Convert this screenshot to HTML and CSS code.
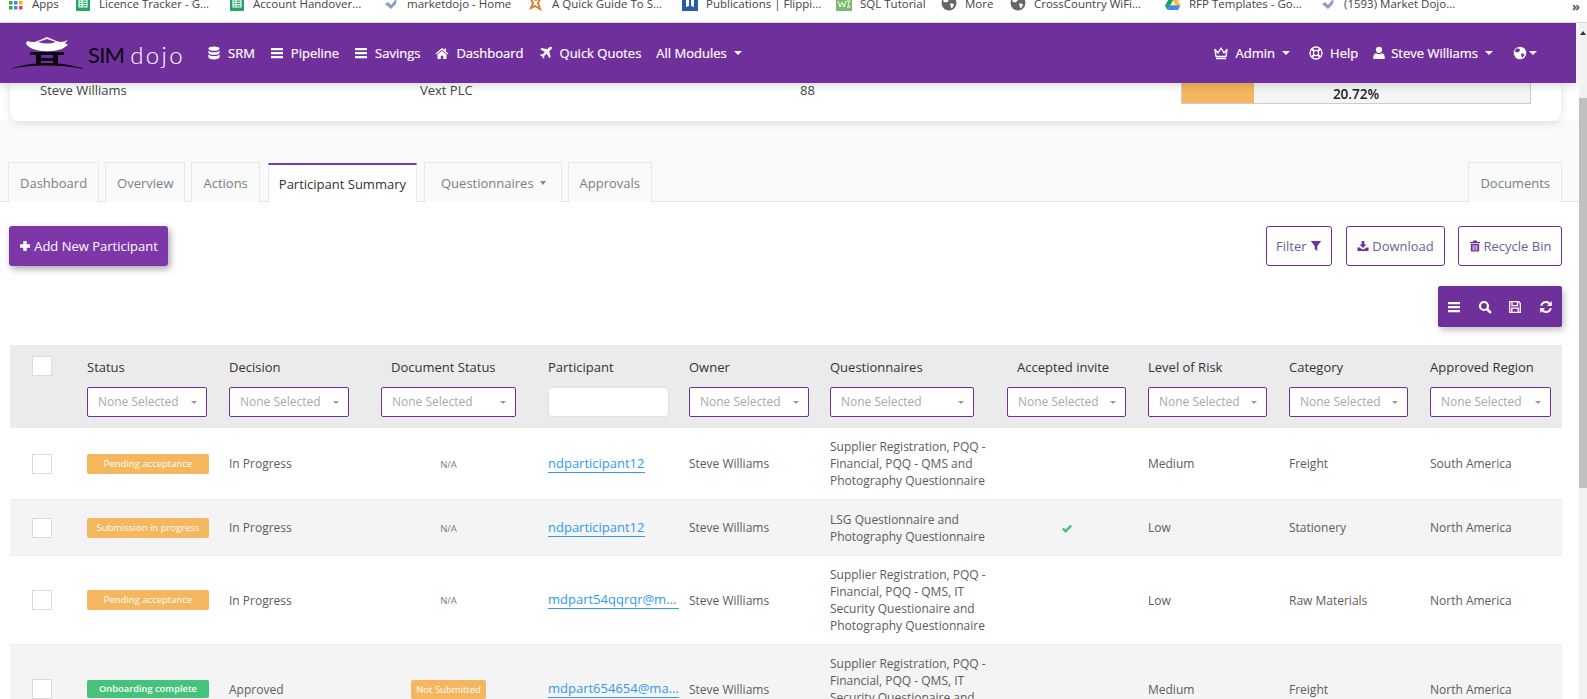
FILE: index.html
```html
<!DOCTYPE html>
<html lang="en">
<head>
<meta charset="utf-8">
<title>Participant Summary</title>
<link rel="stylesheet" href="styles.css">
</head>
<body>
<svg class="defs" width="0" height="0" aria-hidden="true">
  <symbol id="i-bars" viewBox="0 0 14 14"><path d="M1 2h12v2.2H1zM1 6h12v2.2H1zM1 10h12v2.2H1z" fill="currentColor"/></symbol>
  <symbol id="i-db" viewBox="0 0 14 14"><g fill="currentColor"><ellipse cx="7" cy="2.6" rx="5.6" ry="2.2"/><path d="M1.4 4.4c1 1.3 3 1.8 5.6 1.8s4.600-.5 5.600-1.800v2.300c0 1.200-2.500 2.100-5.600 2.100s-5.600-.9-5.600-2.100z"/><path d="M1.400 8.300c1 1.300 3 1.800 5.600 1.800s4.600-.5 5.600-1.800v3c0 1.200-2.500 2.100-5.600 2.100s-5.600-.9-5.600-2.100z"/></g></symbol>
  <symbol id="i-home" viewBox="0 0 14 14"><path d="M7 2 .5 7.500l.8.9L7 3.700l5.700 4.700.8-.9L11 5.400V2.500H9.500v1.600zM2.500 8.400V13h3.300V9.700h2.400V13h3.300V8.400L7 4.700z" fill="currentColor"/></symbol>
  <symbol id="i-plane" viewBox="0 0 14 14"><path d="M12.800 1.200c-.8-.8-2-.4-2.800.4L8.300 3.300 2.600 2 1.400 3.200l4.500 2.700-2.400 2.600-1.700-.3-.9.900 2.300 1.300 1.300 2.300.9-.9-.3-1.700 2.600-2.400 2.700 4.500 1.200-1.200-1.300-5.700 1.700-1.700c.8-.8 1.200-2 .8-2.600z" fill="currentColor"/></symbol>
  <symbol id="i-crown" viewBox="0 0 16 14"><path d="M2 3.500 5 7l3-5 3 5 3-3.500-1 7H3zM3 12.500h10" fill="none" stroke="currentColor" stroke-width="1.400" stroke-linejoin="round"/></symbol>
  <symbol id="i-life" viewBox="0 0 14 14"><g fill="none" stroke="currentColor"><circle cx="7" cy="7" r="6" stroke-width="1.300"/><circle cx="7" cy="7" r="2.600" stroke-width="1.200"/><path d="m2.800 2.800 2.400 2.400M11.200 2.800 8.800 5.200M2.800 11.200l2.400-2.400M11.200 11.200 8.800 8.800" stroke-width="2.200"/></g></symbol>
  <symbol id="i-user" viewBox="0 0 12 14"><g fill="currentColor"><circle cx="6" cy="3.800" r="3.100"/><path d="M.8 13c-.4 0-.6-.3-.6-.7 0-2.800.9-5 2.900-5 .8.700 1.800 1 2.900 1s2.100-.3 2.900-1c2 0 2.900 2.200 2.900 5 0 .4-.2.700-.6.700z"/></g></symbol>
  <symbol id="i-globe" viewBox="0 0 14 14"><circle cx="7" cy="7" r="6.300" fill="currentColor"/><path d="M4 2.200c1 .5 2.400.3 3 1.300.6 1-.8 1.400-1.300 2.300-.5.900-2 .5-3 .3-.7-.2-.9-1 -.4-2 .4-.8 1-1.400 1.700-1.900zM8.300 7.500c1-.3 2.400 0 3 .8.300.8-.8 2.600-1.900 3.300-.8-.3-.6-1.500-1-2.300-.3-.6-.8-1.500-.1-1.800z" fill="#70309c"/></symbol>
  <symbol id="i-globe-grey" viewBox="0 0 14 14"><circle cx="7" cy="7" r="6.500" fill="#666"/><path d="M4 2.200c1 .5 2.400.3 3 1.300.6 1-.8 1.400-1.300 2.300-.5.900-2 .5-3 .3-.7-.2-.9-1 -.4-2 .4-.8 1-1.400 1.700-1.900zM8.300 7.500c1-.3 2.400 0 3 .8.300.8-.8 2.600-1.900 3.300-.8-.3-.6-1.500-1-2.300-.3-.6-.8-1.500-.1-1.800z" fill="#fff"/></symbol>
  <symbol id="i-plus" viewBox="0 0 12 12"><path d="M4.300 1h3.400v3.300H11v3.400H7.700V11H4.300V7.700H1V4.300h3.300z" fill="currentColor"/></symbol>
  <symbol id="i-filter" viewBox="0 0 12 12"><path d="M.8 1h10.400L7.300 6v5L4.700 9V6z" fill="currentColor"/></symbol>
  <symbol id="i-download" viewBox="0 0 13 12"><path d="M5 .5h3v4h2.300L6.500 8.300 2.700 4.500H5zM.5 7.500h2.600l2 2h2.800l2-2h2.600v4H.5z" fill="currentColor"/></symbol>
  <symbol id="i-trash" viewBox="0 0 11 12"><path d="M4 .5h3l.8 1.500H10.500v1.200H.5V2h2.700zM1.300 4h8.400v6.500c0 .6-.4 1-1 1H2.300c-.6 0-1-.4-1-1zM3.200 5v5.500h.8V5zM5.100 5v5.500h.8V5zM7 5v5.500h.8V5z" fill="currentColor" fill-rule="evenodd"/></symbol>
  <symbol id="i-search" viewBox="0 0 14 14"><g fill="none" stroke="currentColor"><circle cx="6" cy="6" r="4" stroke-width="2.200"/><path d="m9 9 3.800 3.800" stroke-width="2.600"/></g></symbol>
  <symbol id="i-save" viewBox="0 0 14 14"><path d="M1.700 1.700h9l1.600 1.600v9H1.700zM4 1.700v4h5.500v-4M3.800 12.300V8.200h6.400v4.100" fill="none" stroke="currentColor" stroke-width="1.300"/></symbol>
  <symbol id="i-refresh" viewBox="0 0 14 14"><g fill="currentColor"><path d="M1.200 5.800C1.800 3 4.200 1 7 1c1.700 0 3.100.7 4.200 1.700L12.800 1v5H7.900l1.800-1.800C9 3.500 8 3.100 7 3.100c-1.700 0-3.200 1.100-3.700 2.700z"/><path d="M12.800 8.200C12.200 11 9.800 13 7 13c-1.700 0-3.100-.7-4.200-1.700L1.200 13V8h4.900l-1.800 1.800C5 10.500 6 10.900 7 10.900c1.700 0 3.200-1.100 3.700-2.700z"/></g></symbol>
  <symbol id="i-check" viewBox="0 0 12 10"><path d="M1 5.200 2.700 3.600 4.600 5.500 9.300.8 11 2.400 4.600 8.900z" fill="currentColor"/></symbol>
  <symbol id="i-tick" viewBox="0 0 16 16"><path d="M2 9l3-2 3 3 6-7-1 6-5 5z" fill="#8aa0c8"/><path d="M11 1l3 2-2 3z" fill="#e3a04a"/></symbol>
  <symbol id="i-sheet" viewBox="0 0 16 16"><rect x="1" y="0" width="14" height="16" rx="1" fill="#23a566"/><path d="M4 5h8v7H4zM4 7.300h8M4 9.600h8M7 5v7" fill="none" stroke="#fff" stroke-width="1.100"/></symbol>
</svg>

<div class="bookmarks">
  <div class="bm w-a"><svg class="bm-ico" viewBox="0 0 16 16"><g><rect x="1" y="1" width="3.500" height="3.500" fill="#e8453c"/><rect x="6" y="1" width="3.500" height="3.500" fill="#f9bb2d"/><rect x="11" y="1" width="3.500" height="3.500" fill="#f4b400"/><rect x="1" y="6" width="3.500" height="3.500" fill="#34a853"/><rect x="6" y="6" width="3.500" height="3.500" fill="#4285f4"/><rect x="11" y="6" width="3.500" height="3.500" fill="#f4b400"/><rect x="1" y="11" width="3.500" height="3.500" fill="#34a853"/><rect x="6" y="11" width="3.500" height="3.500" fill="#4285f4"/><rect x="11" y="11" width="3.500" height="3.500" fill="#e8453c"/></g></svg><span>Apps</span></div>
  <div class="bm w-b"><svg class="bm-ico"><use href="#i-sheet"/></svg><span>Licence Tracker - G...</span></div>
  <div class="bm w-c"><svg class="bm-ico"><use href="#i-sheet"/></svg><span>Account Handover...</span></div>
  <div class="bm w-d"><svg class="bm-ico"><use href="#i-tick"/></svg><span>marketdojo - Home</span></div>
  <div class="bm w-e"><svg class="bm-ico" viewBox="0 0 16 16"><path d="M2 2l6 3 5-3-3 6 2 6-5-3-4 2 2-5z" fill="none" stroke="#d9822b" stroke-width="2"/></svg><span>A Quick Guide To S...</span></div>
  <div class="bm w-f"><svg class="bm-ico" viewBox="0 0 16 16"><rect width="16" height="16" fill="#2a5ba8"/><path d="M4 4v8l3-1V5zM12 4v8l-3-1V5z" fill="#fff"/></svg><span>Publications | Flippi...</span></div>
  <div class="bm w-g"><svg class="bm-ico" viewBox="0 0 16 16"><rect width="16" height="16" fill="#7cb96b"/><path d="M2 6l2 6 2-5 2 5 2-6M11 6h3l-2 3 2 3h-3" fill="none" stroke="#fff" stroke-width="1"/></svg><span>SQL Tutorial</span></div>
  <div class="bm w-h"><svg class="bm-ico"><use href="#i-globe-grey"/></svg><span>More</span></div>
  <div class="bm w-i"><svg class="bm-ico"><use href="#i-globe-grey"/></svg><span>CrossCountry WiFi...</span></div>
  <div class="bm w-j"><svg class="bm-ico" viewBox="0 0 16 16"><path d="M5.500 1h5l5 9h-5z" fill="#fbc02d"/><path d="M5.500 1 0 10.500 2.500 15 8 5.500z" fill="#1ea362"/><path d="M2.500 15h10.500l2.500-4.800H5.200z" fill="#4688f1"/></svg><span>RFP Templates - Go...</span></div>
  <div class="bm w-k"><svg class="bm-ico"><use href="#i-tick"/></svg><span>(1593) Market Dojo...</span></div>
  <div class="bm-more">»</div>
</div>

<div class="app">
  <div class="page">
    <header class="nav">
      <div class="logo">
        <svg class="logo-mark" viewBox="0 0 76 34">
          <path d="M0 33c12-4 24-6 37-6s27 2 39 6c-13-2.500-26-3.500-39-3.500S12 30.500 0 33z" fill="#0a0510"/>
          <path d="M21 16h34v3H49v9h-5v-3H32v3h-5v-9h-6zM32 19v3h12v-3z" fill="#0a0510" fill-rule="evenodd"/>
          <path d="M18 5c5 2 9 1 13-1l7-3 7 3c4 2 8 3 14 0l-3 3 3 2-6 4c-10 3-20 3-29 0-3-1-5-3-7-5z" fill="#fff"/>
          <path d="M29 6l9-3 9 3c-6 2-12 2-18 0z" fill="#70309c"/>
        </svg>
        <span class="logo-sim">SIM</span><span class="logo-dojo">dojo</span>
      </div>
      <nav class="menu">
        <a class="item"><svg class="ico"><use href="#i-db"/></svg>SRM</a>
        <a class="item"><svg class="ico"><use href="#i-bars"/></svg>Pipeline</a>
        <a class="item"><svg class="ico"><use href="#i-bars"/></svg>Savings</a>
        <a class="item"><svg class="ico"><use href="#i-home"/></svg>Dashboard</a>
        <a class="item"><svg class="ico"><use href="#i-plane"/></svg>Quick Quotes</a>
        <a class="item">All Modules<i class="caret"></i></a>
      </nav>
      <nav class="menu menu-right">
        <a class="item m-admin"><svg class="ico ico-wide"><use href="#i-crown"/></svg>Admin<i class="caret"></i></a>
        <a class="item"><svg class="ico"><use href="#i-life"/></svg>Help</a>
        <a class="item m-user"><svg class="ico ico-thin"><use href="#i-user"/></svg>Steve Williams<i class="caret"></i></a>
        <a class="item"><svg class="ico ico-none"><use href="#i-globe"/></svg><i class="caret caret-tight"></i></a>
      </nav>
    </header>

    <section class="card">
      <div class="card-col c-owner">Steve Williams</div>
      <div class="card-col c-company">Vext PLC</div>
      <div class="card-col c-count">88</div>
      <div class="progress">
        <div class="progress-fill" style="width:20.72%"></div>
        <div class="progress-text">20.72%</div>
      </div>
    </section>

    <div class="tabs">
      <a class="tab">Dashboard</a>
      <a class="tab">Overview</a>
      <a class="tab">Actions</a>
      <a class="tab tab-active">Participant Summary</a>
      <a class="tab tab-q">Questionnaires<i class="caret caret-grey"></i></a>
      <a class="tab">Approvals</a>
      <a class="tab tab-docs">Documents</a>
    </div>

    <div class="actions">
      <button class="btn-primary"><svg class="btn-ico"><use href="#i-plus"/></svg>Add New Participant</button>
      <div class="actions-right">
        <button class="btn-outline b-filter">Filter <svg class="btn-ico"><use href="#i-filter"/></svg></button>
        <button class="btn-outline b-down"><svg class="btn-ico"><use href="#i-download"/></svg>Download</button>
        <button class="btn-outline b-bin"><svg class="btn-ico"><use href="#i-trash"/></svg>Recycle Bin</button>
      </div>
    </div>

    <div class="toolbar-row">
      <div class="toolbar">
        <svg class="tool-ico"><use href="#i-bars"/></svg>
        <svg class="tool-ico"><use href="#i-search"/></svg>
        <svg class="tool-ico"><use href="#i-save"/></svg>
        <svg class="tool-ico"><use href="#i-refresh"/></svg>
      </div>
    </div>

    <table class="grid">
      <colgroup>
        <col class="k0"><col class="k1"><col class="k2"><col class="k3"><col class="k4"><col class="k5"><col class="k6"><col class="k7"><col class="k8"><col class="k9"><col class="k10">
      </colgroup>
      <thead>
        <tr>
          <th class="cb-cell"><span class="box"></span></th>
          <th><div class="th-label">Status</div><div class="sel">None Selected</div></th>
          <th><div class="th-label">Decision</div><div class="sel">None Selected</div></th>
          <th class="doc"><div class="th-label th-inset">Document Status</div><div class="sel sel-full">None Selected</div></th>
          <th class="part"><div class="th-label">Participant</div><input class="part-input" type="text" aria-label="Participant"></th>
          <th><div class="th-label">Owner</div><div class="sel">None Selected</div></th>
          <th><div class="th-label">Questionnaires</div><div class="sel sel-q">None Selected</div></th>
          <th><div class="th-label th-inset">Accepted invite</div><div class="sel sel-full">None Selected</div></th>
          <th><div class="th-label">Level of Risk</div><div class="sel sel-full">None Selected</div></th>
          <th><div class="th-label">Category</div><div class="sel sel-full">None Selected</div></th>
          <th><div class="th-label">Approved Region</div><div class="sel sel-full">None Selected</div></th>
        </tr>
      </thead>
      <tbody>
        <tr>
          <td class="cb-cell"><span class="box"></span></td>
          <td><span class="badge amber">Pending acceptance</span></td>
          <td>In Progress</td>
          <td class="doc center"><span class="na">N/A</span></td>
          <td class="part"><a class="link">ndparticipant12</a></td>
          <td>Steve Williams</td>
          <td class="q">Supplier Registration, PQQ - Financial, PQQ - QMS and Photography Questionnaire</td>
          <td class="center"></td>
          <td>Medium</td>
          <td>Freight</td>
          <td>South America</td>
        </tr>
        <tr class="row-two">
          <td class="cb-cell"><span class="box"></span></td>
          <td><span class="badge amber">Submission in progress</span></td>
          <td>In Progress</td>
          <td class="doc center"><span class="na">N/A</span></td>
          <td class="part"><a class="link">ndparticipant12</a></td>
          <td>Steve Williams</td>
          <td class="q">LSG Questionnaire and Photography Questionnaire</td>
          <td class="center"><svg class="check"><use href="#i-check"/></svg></td>
          <td>Low</td>
          <td>Stationery</td>
          <td>North America</td>
        </tr>
        <tr>
          <td class="cb-cell"><span class="box"></span></td>
          <td><span class="badge amber">Pending acceptance</span></td>
          <td>In Progress</td>
          <td class="doc center"><span class="na">N/A</span></td>
          <td class="part"><a class="link">mdpart54qqrqr@marketdojo.com</a></td>
          <td>Steve Williams</td>
          <td class="q">Supplier Registration, PQQ - Financial, PQQ - QMS, IT Security Questionaire and Photography Questionnaire</td>
          <td class="center"></td>
          <td>Low</td>
          <td>Raw Materials</td>
          <td>North America</td>
        </tr>
        <tr>
          <td class="cb-cell"><span class="box"></span></td>
          <td><span class="badge green">Onboarding complete</span></td>
          <td>Approved</td>
          <td class="doc center"><span class="badge amber badge-small">Not Submitted</span></td>
          <td class="part"><a class="link">mdpart654654@marketdojo.com</a></td>
          <td>Steve Williams</td>
          <td class="q">Supplier Registration, PQQ - Financial, PQQ - QMS, IT Security Questionaire and Photography Questionnaire</td>
          <td class="center"></td>
          <td>Medium</td>
          <td>Freight</td>
          <td>North America</td>
        </tr>
      </tbody>
    </table>
  </div>
  <aside class="scrollbar">
    <i class="scroll-up"></i>
    <div class="scroll-thumb"></div>
  </aside>
</div>
</body>
</html>
```

FILE: styles.css
```css
* { box-sizing: border-box; }
html, body { margin: 0; height: 699px; overflow: hidden; background: #fff; }
body { font-family: "Open Sans", "Liberation Sans", sans-serif; font-size: 12px; color: #555; }
.defs { position: absolute; }

/* Browser bookmarks bar */
.bookmarks { height: 23px; display: flex; padding-left: 8px; border-bottom: 1px solid #d8d8d8; overflow: hidden; background: #fff; }
.bm { flex: none; display: flex; align-items: center; gap: 8px; height: 16px; margin-top: -5px; font-size: 11.5px; color: #444; white-space: nowrap; }
.bm-ico { width: 16px; height: 16px; flex: none; }
.w-a { width: 67px; } .w-b { width: 154px; } .w-c { width: 154px; } .w-d { width: 145px; }
.w-e { width: 154px; } .w-f { width: 154px; } .w-g { width: 105px; } .w-h { width: 69px; }
.w-i { width: 155px; } .w-j { width: 155px; } .w-k { width: 252px; }
.bm-more { font-size: 13px; color: #555; line-height: 10px; font-weight: 700; margin-top: 1px; }

.app { display: flex; height: 676px; }
.page { width: 1579px; flex: none; overflow: hidden; height: 676px; }

/* Top navigation */
.nav { position: relative; z-index: 2; width: 1576px; height: 60px; background: #70309c; display: flex; align-items: center; padding: 0 0 0 9px; color: #fff; box-shadow: 0 3px 8px rgba(0, 0, 0, .14); }
.logo { display: flex; align-items: center; width: 198px; flex: none; height: 60px; padding-top: 2px; }
.logo-mark { width: 76px; height: 34px; flex: none; margin-top: -3px; }
.logo-sim { font-family: Lato, sans-serif; font-weight: 400; font-size: 22px; color: #0a0510; margin-left: 3px; letter-spacing: -.8px; }
.logo-dojo { font-family: Lato, sans-serif; font-weight: 300; font-size: 24px; color: #fff; margin-left: 6px; letter-spacing: 2.400px; }
.menu { display: flex; align-items: center; }
.menu-right { margin-left: auto; padding-right: 39px; }
.item { display: flex; align-items: center; font-size: 13px; font-weight: 400; white-space: nowrap; color: #fff; margin-right: 15px; -webkit-text-stroke: .2px #fff; }
.ico { width: 14px; height: 14px; flex: none; margin-right: 7px; }
.ico-wide { width: 16px; }
.ico-thin { width: 12px; margin-right: 6px; }
.ico-none { margin-right: 0; }
.m-admin { margin-right: 19px; }
.m-user { margin-right: 20px; }
.caret { display: inline-block; width: 0; height: 0; margin-left: 7px; border-left: 4px solid transparent; border-right: 4px solid transparent; border-top: 4px solid currentColor; }
.caret-tight { margin-left: 2px; }
.caret-grey { color: #888; border-left-width: 3.5px; border-right-width: 3.5px; margin-left: 6px; }
.menu-right .item:last-child { margin-right: 0; }

/* Event summary card */
.card { position: relative; z-index: 1; margin: 0 18px 0 10px; height: 38px; background: #fff; border-radius: 0 0 8px 8px; box-shadow: 0 2px 8px rgba(0, 0, 0, .12); display: flex; font-size: 13px; color: #444; }
.card-col { flex: none; line-height: 15px; height: 15px; }
.c-owner { margin-left: 30px; width: 380px; }
.c-company { width: 380px; }
.c-count { width: 381px; }
.progress { position: relative; flex: none; width: 350px; height: 21px; background: #f5f5f5; border: 1px solid #ccc; border-top: 0; }
.progress-fill { height: 100%; background: #f4b65f; }
.progress-text { position: absolute; inset: 0; text-align: center; font-size: 13.500px; font-weight: 600; color: #222; line-height: 22px; }

/* Tabs */
.tabs { background: #f9fafa; height: 81px; padding: 41px 17px 0 8px; display: flex; gap: 6px; border-bottom: 1px solid #e2e4e4; }
.tab { height: 40px; padding: 0 11px; display: flex; align-items: center; font-size: 13px; color: #7a7d86; border: 1px solid #e6e8e8; border-bottom: 0; background: #f9fafa; }
.tab-active { color: #333; background: #fff; border-top: 2px solid #7e37b0; padding: 0 10px; margin: 1px 0 -1px 2px; }
.tab-q { padding: 0 15px 0 16px; margin-left: 1px; }
.tab-docs { margin-left: auto; }

/* Action buttons */
.actions { display: flex; justify-content: space-between; padding: 24px 17px 0 9px; }
.actions-right { display: flex; gap: 13px; }
.btn-primary { height: 40px; width: 159px; border: 0; border-radius: 3px; background: #7e37a8; color: #fff; font: 400 13px "Open Sans", sans-serif; display: flex; align-items: center; justify-content: center; box-shadow: 2px 3px 7px rgba(0, 0, 0, .35); padding: 0; }
.btn-outline { height: 40px; border: 1px solid #70309c; border-radius: 3px; background: #fff; color: #6d5f95; font: 400 13px "Open Sans", sans-serif; display: flex; align-items: center; justify-content: center; padding: 0; white-space: pre; }
.b-filter { width: 66px; margin-right: 1px; } .b-down { width: 99px; } .b-bin { width: 104px; }
.btn-ico { width: 12px; height: 12px; margin-right: 3px; color: #70309c; flex: none; }
.btn-primary .btn-ico { color: #fff; }
.b-filter .btn-ico { margin: 0; }

.toolbar-row { display: flex; justify-content: flex-end; padding: 20px 17px 18px 0; }
.toolbar { width: 124px; height: 41px; background: #70309c; border-radius: 2px; display: flex; align-items: center; justify-content: space-between; padding: 0 9px; box-shadow: 2px 3px 7px rgba(0, 0, 0, .25); }
.tool-ico { width: 14px; height: 14px; color: #fff; }

/* Table */
.grid { margin-left: 10px; width: 1552px; table-layout: fixed; border-collapse: collapse; font-size: 12px; }
.k0 { width: 66px; } .k1 { width: 142px; } .k2 { width: 152px; } .k3 { width: 167px; } .k4 { width: 141px; }
.k5 { width: 141px; } .k6 { width: 177px; } .k7 { width: 141px; } .k8 { width: 141px; } .k9 { width: 141px; } .k10 { width: 143px; }
thead tr { height: 83px; background: #ebebeb; }
th { padding: 13px 11px 10px; font-weight: 400; text-align: left; vertical-align: top; color: #333; }
.th-label { height: 20px; line-height: 18px; margin-bottom: 9px; white-space: nowrap; font-size: 13px; }
.th-inset { padding-left: 10px; }
.center { text-align: center; }
.doc { padding-right: 21px; }
.part { padding-right: 0; }
.q { padding-right: 4px; }
.sel { position: relative; width: 120px; height: 30px; padding-left: 10px; background: #fff; border: 1px solid #70309c; border-radius: 2px; color: #a9a9a9; line-height: 27px; font-size: 12px; text-align: left; white-space: nowrap; }
.sel::after { content: ""; position: absolute; right: 9px; top: 13px; border-left: 3px solid transparent; border-right: 3px solid transparent; border-top: 3px solid #999; }
.sel-full { width: 100%; }
.sel-q { width: 144px; }
.part-input { width: 121px; height: 30px; border: 1px solid #e0e0e0; border-radius: 4px; background: #fff; display: block; }
.cb-cell { padding: 0 0 0 22px; }
th.cb-cell { padding-top: 11px; }
.box { display: block; width: 20px; height: 20px; background: #fff; border: 1px solid #dcdcdc; }
tbody tr { border-bottom: 1px solid #ececec; background: #fff; }
tbody tr:nth-child(even) { background: #f4f4f4; }
.row-two { height: 56px; }
td { padding: 10px 11px; line-height: 17px; vertical-align: middle; color: #5c5c5c; font-size: 12px; }
.badge { display: block; width: 122px; height: 20px; line-height: 19px; border-radius: 2px; color: #fff; font-size: 9.500px; font-weight: 400; text-align: center; white-space: nowrap; }
.amber { background: #f4b65f; }
.green { background: #45c37a; height: 18px; line-height: 17px; font-weight: 600; font-size: 9.300px; }
.badge-small { width: 75px; height: 19px; margin: 0 auto; }
.na { font-size: 9.500px; color: #777; }
.link { display: inline-block; max-width: 131px; overflow: hidden; text-overflow: ellipsis; white-space: nowrap; vertical-align: middle; color: #2e9bf0; border-bottom: 1px solid #2e9bf0; font-size: 13px; line-height: 17px; }
.check { width: 12px; height: 10px; color: #45c37a; vertical-align: middle; }

/* Page scrollbar */
.scrollbar { flex: none; width: 8px; background: #f1f1f1; display: flex; flex-direction: column; align-items: center; }
.scroll-up { display: block; width: 0; height: 0; margin-top: 8px; border-left: 3.500px solid transparent; border-right: 3.500px solid transparent; border-bottom: 4px solid #333; }
.scroll-thumb { width: 100%; height: 390px; margin-top: 63px; background: #c0c0c0; }
```
